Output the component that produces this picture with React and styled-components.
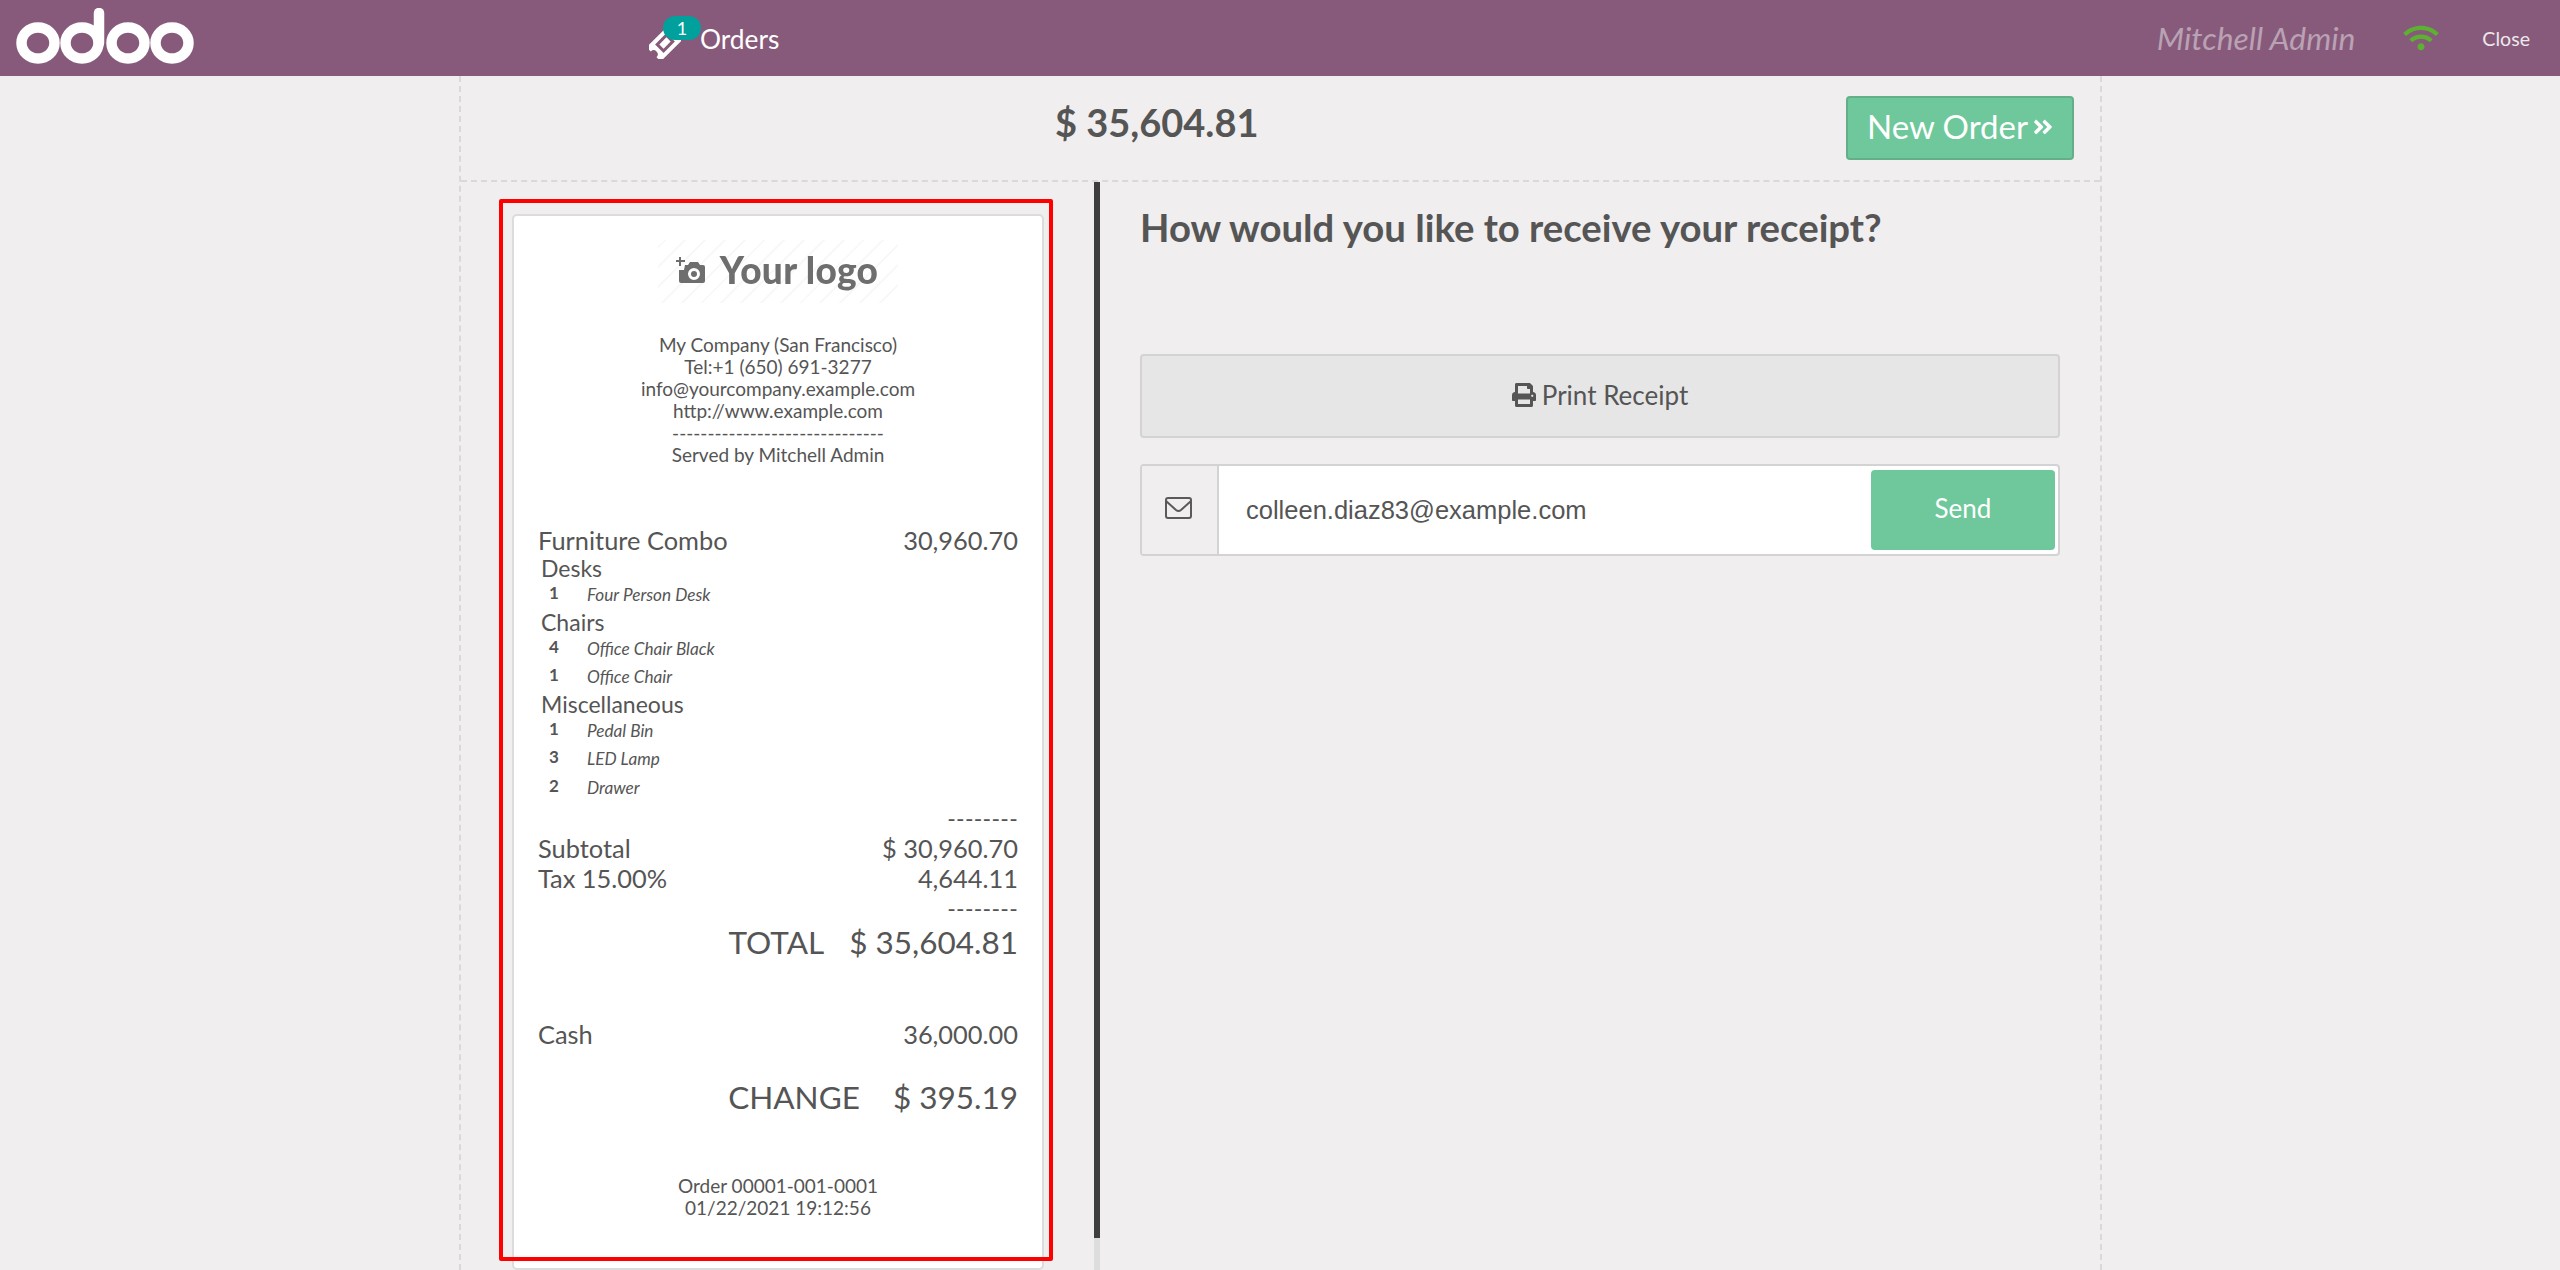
import React from 'react';
import styled, { createGlobalStyle } from 'styled-components';
import { FaPrint, FaAngleDoubleRight, FaWifi } from 'react-icons/fa';

const GlobalStyle = createGlobalStyle`
    html, body {
        margin: 0;
        height: 100%;
        overflow: hidden;
        background-color: #f0eeee;
        font-family: Lato, "Open Sans", sans-serif;
        color: #555555;
    }
`;

const Page = styled.div`
    width: 2560px;
    height: 1270px;
    display: flex;
    flex-direction: column;
    overflow: hidden;
`;

const Navbar = styled.header`
    height: 76px;
    flex: none;
    display: flex;
    align-items: center;
    background-color: #875a7b;
    color: #fff;
`;

const LogoMark = styled.svg`
    width: 180px;
    height: 56px;
    margin: 8px 0 0 16px;
    flex: none;
    align-self: flex-start;
`;

const OrdersTab = styled.div`
    position: relative;
    display: flex;
    align-items: center;
    margin-left: 453px;
    font-size: 26.300px;
    height: 76px;
`;

const TicketIcon = styled.svg`
    width: 32px;
    height: 32px;
    margin: 10px 19px 0 0;
`;

const Badge = styled.span`
    position: absolute;
    left: 14px;
    top: 16px;
    width: 38px;
    height: 24px;
    border-radius: 12px;
    background-color: #00a09d;
    font-size: 18px;
    line-height: 24px;
    text-align: center;
`;

const OrdersLabel = styled.span`
    margin-top: 2px;
`;

const NavRight = styled.div`
    margin-left: auto;
    display: flex;
    align-items: center;
`;

const UserName = styled.span`
    font-size: 31.800px;
    font-style: italic;
    color: #b9a2b4;
`;

const Wifi = styled(FaWifi)`
    margin-left: 48px;
    width: 36px;
    height: 28px;
    color: #5cb130;
`;

const CloseLink = styled.span`
    margin: 0 30px 0 43px;
    font-size: 19.600px;
    color: #ece8eb;
`;

const Screen = styled.main`
    flex: 1;
    min-height: 0;
    width: 1639px;
    margin-left: 459px;
    border-left: 2px dashed #d9d9d9;
    border-right: 2px dashed #d9d9d9;
    display: flex;
    flex-direction: column;
`;

const TopRow = styled.div`
    height: 104px;
    flex: none;
    position: relative;
    display: flex;
    align-items: center;
    justify-content: flex-end;
    border-bottom: 2px dashed #d9d9d9;
    padding-right: 26px;
`;

const TopAmount = styled.div`
    position: absolute;
    left: 594px;
    top: 17px;
    font-size: 38px;
    font-weight: 700;
    line-height: 58px;
`;

const NewOrder = styled.button`
    width: 228px;
    height: 64px;
    box-sizing: border-box;
    background-color: #6ec89b;
    border: 2px solid #64af8a;
    border-radius: 4px;
    color: #fff;
    font-family: inherit;
    font-size: 33px;
    display: flex;
    align-items: center;
    justify-content: center;
    gap: 5px;
    padding: 0 0 5px 0;
    svg {
        width: 20px;
        height: 24px;
        margin-top: 3px;
    }
`;

const Body = styled.div`
    flex: 1;
    min-height: 0;
    display: flex;
`;

const ReceiptColumn = styled.section`
    position: relative;
    width: 639px;
    flex: none;
    padding: 32px 0 0 51px;
    box-sizing: border-box;
    border-right: 6px solid transparent;
    background:
        linear-gradient(#3e3e3e, #3e3e3e) right top / 6px 1056px no-repeat border-box,
        linear-gradient(#dddddd, #dddddd) right top / 6px 100% no-repeat border-box;
`;

const Highlight = styled.div`
    position: absolute;
    left: 38px;
    top: 17px;
    width: 554px;
    height: 1062px;
    box-sizing: border-box;
    border: 4px solid #ff0000;
    border-radius: 2px;
    pointer-events: none;
`;

const Receipt = styled.div`
    width: 532px;
    height: 1056px;
    box-sizing: border-box;
    background-color: #fff;
    border: 2px solid #dcdcdc;
    border-radius: 5px;
    padding: 24px 24px 0 24px;
`;

const ReceiptLogo = styled.div`
    width: 240px;
    height: 63px;
    margin: 0 auto 31px auto;
    display: flex;
    align-items: center;
    justify-content: center;
    gap: 14px;
    color: #6e6e6e;
    padding-right: 2px;
    box-sizing: border-box;
    background: repeating-linear-gradient(-45deg, #fff 0 12px, #f8f8f8 12px 14px);
`;

const CameraIcon = styled.svg`
    width: 30px;
    height: 30px;
    margin-top: -2px;
    filter: blur(0.5px);
`;

const ReceiptLogoText = styled.span`
    font-size: 37px;
    font-weight: 900;
    letter-spacing: 0.3px;
    line-height: 59px;
    height: 59px;
    margin-bottom: 4px;
    filter: blur(0.7px);
`;

const CenterBlock = styled.div`
    text-align: center;
    font-size: 19px;
    line-height: 22px;
    margin-top: ${props => props.$top || 0}px;
`;

const ItemsBlock = styled.div`
    margin: 59px 0 1px 0;
`;

const LineRow = styled.div`
    display: flex;
    justify-content: space-between;
    font-size: 25.400px;
    line-height: 30px;
    margin-top: ${props => props.$top || 0}px;
`;

const RightRow = styled.div`
    display: flex;
    justify-content: flex-end;
    gap: ${props => props.$gap}px;
    font-size: 31.500px;
    line-height: 40px;
    margin-top: ${props => props.$top || 0}px;
`;

const GroupName = styled.div`
    font-size: 23px;
    line-height: 26px;
    padding-left: 3px;
`;

const SubItem = styled.div`
    display: flex;
    align-items: flex-start;
    height: ${props => props.$height || 28}px;
    line-height: 26px;
`;

const SubQty = styled.span`
    width: 49px;
    padding-left: 11px;
    box-sizing: border-box;
    font-size: 17px;
    font-weight: 700;
    line-height: 24px;
`;

const SubName = styled.span`
    font-size: 17.200px;
    font-style: italic;
    line-height: 28px;
`;

const Dashes = styled.div`
    text-align: right;
    font-size: 23px;
    line-height: 30px;
    height: 30px;
    letter-spacing: 0.3px;
`;

const ActionsColumn = styled.section`
    flex: 1;
    padding: 11px 40px 0 40px;
`;

const ActionsTitle = styled.h2`
    margin: 0;
    font-size: 38.300px;
    font-weight: 700;
    line-height: 68px;
`;

const PrintButton = styled.button`
    width: 100%;
    height: 84px;
    margin-top: 93px;
    box-sizing: border-box;
    background-color: #e6e6e6;
    border: 2px solid #d3d3d3;
    border-radius: 4px;
    color: #555;
    font-family: inherit;
    font-size: 26px;
    display: flex;
    align-items: center;
    justify-content: center;
    gap: 6px;
    padding: 0 0 2px 0;
    svg {
        width: 24px;
        height: 24px;
    }
`;

const EmailGroup = styled.div`
    height: 92px;
    margin-top: 26px;
    box-sizing: border-box;
    display: flex;
    background-color: #fff;
    border: 2px solid #d3d3d3;
    border-radius: 4px;
    overflow: hidden;
`;

const EmailAddon = styled.div`
    width: 77px;
    flex: none;
    display: flex;
    align-items: center;
    justify-content: center;
    padding-right: 2px;
    box-sizing: border-box;
    background-color: #f0eeee;
    border-right: 2px solid #d3d3d3;
    svg {
        width: 27px;
        height: 22px;
        margin-bottom: 4px;
    }
`;

const EmailValue = styled.div`
    flex: 1;
    padding-left: 27px;
    font-family: "Liberation Sans", Arial, sans-serif;
    font-size: 25.500px;
    line-height: 88px;
`;

const SendButton = styled.button`
    width: 184px;
    height: 80px;
    margin: 4px 3px 0 0;
    flex: none;
    background-color: #6ec89b;
    border: none;
    border-radius: 4px;
    color: #fff;
    font-family: inherit;
    font-size: 26px;
    padding: 0 0 4px 0;
`;

function OdooLogo() {
    return (
        <LogoMark viewBox="0 0 180 56" fill="none" stroke="#fff" strokeWidth="10.5">
            <ellipse cx="22" cy="35" rx="16.5" ry="15.5" />
            <ellipse cx="66" cy="35" rx="16.5" ry="15.5" />
            <path d="M83 5v30" strokeLinecap="round" />
            <ellipse cx="112" cy="35" rx="16.5" ry="15.5" />
            <ellipse cx="156" cy="35" rx="16.5" ry="15.5" />
        </LogoMark>
    );
}

function Ticket() {
    return (
        <TicketIcon viewBox="0 0 32 32">
            <g transform="rotate(-45 16 16)">
                <path
                    fill="#fff"
                    fillRule="evenodd"
                    d="M0 6h32v6a4 4 0 0 0 0 8v6H0v-6a4 4 0 0 0 0-8zM8 10v12h16v-12z"
                />
                <rect x="11" y="13" width="10" height="6" fill="#fff" />
            </g>
        </TicketIcon>
    );
}

function Camera() {
    return (
        <CameraIcon viewBox="0 0 30 30">
            <path
                fill="#6e6e6e"
                fillRule="evenodd"
                d="M9 9h3l2-3h8l2 3h3a2 2 0 0 1 2 2v14a2 2 0 0 1-2 2H5a2 2 0 0 1-2-2V14h5zM18 12a6 6 0 1 0 0 12 6 6 0 0 0 0-12zM18 15a3 3 0 1 1 0 6 3 3 0 0 1 0-6z"
            />
            <path stroke="#6e6e6e" strokeWidth="2" d="M4 1v9M0 5h9" />
        </CameraIcon>
    );
}

function EnvelopeIcon() {
    return (
        <svg viewBox="0 0 27 22" fill="none" stroke="#5a5a5a" strokeWidth="2">
            <rect x="1" y="1" width="25" height="20" rx="2" />
            <path d="M1 4l10 9q2.500 2 5 0l10-9" />
        </svg>
    );
}

export default function App() {
    return (
        <Page>
            <GlobalStyle />
            <Navbar>
                <OdooLogo />
                <OrdersTab>
                    <Ticket />
                    <Badge>1</Badge>
                    <OrdersLabel>Orders</OrdersLabel>
                </OrdersTab>
                <NavRight>
                    <UserName>Mitchell Admin</UserName>
                    <Wifi />
                    <CloseLink>Close</CloseLink>
                </NavRight>
            </Navbar>
            <Screen>
                <TopRow>
                    <TopAmount>$ 35,604.81</TopAmount>
                    <NewOrder>
                        New Order
                        <FaAngleDoubleRight />
                    </NewOrder>
                </TopRow>
                <Body>
                    <ReceiptColumn>
                        <Receipt>
                            <ReceiptLogo>
                                <Camera />
                                <ReceiptLogoText>Your logo</ReceiptLogoText>
                            </ReceiptLogo>
                            <CenterBlock>
                                <div>My Company (San Francisco)</div>
                                <div>Tel:+1 (650) 691-3277</div>
                                <div>info@yourcompany.example.com</div>
                                <div>http://www.example.com</div>
                                <div>------------------------------</div>
                                <div>Served by Mitchell Admin</div>
                            </CenterBlock>
                            <ItemsBlock>
                                <LineRow>
                                    <span>Furniture Combo</span>
                                    <span>30,960.70</span>
                                </LineRow>
                                <GroupName>Desks</GroupName>
                                <SubItem>
                                    <SubQty>1</SubQty>
                                    <SubName>Four Person Desk</SubName>
                                </SubItem>
                                <GroupName>Chairs</GroupName>
                                <SubItem>
                                    <SubQty>4</SubQty>
                                    <SubName>Office Chair Black</SubName>
                                </SubItem>
                                <SubItem>
                                    <SubQty>1</SubQty>
                                    <SubName>Office Chair</SubName>
                                </SubItem>
                                <GroupName>Miscellaneous</GroupName>
                                <SubItem>
                                    <SubQty>1</SubQty>
                                    <SubName>Pedal Bin</SubName>
                                </SubItem>
                                <SubItem $height={29}>
                                    <SubQty>3</SubQty>
                                    <SubName>LED Lamp</SubName>
                                </SubItem>
                                <SubItem>
                                    <SubQty>2</SubQty>
                                    <SubName>Drawer</SubName>
                                </SubItem>
                            </ItemsBlock>
                            <Dashes>--------</Dashes>
                            <LineRow>
                                <span>Subtotal</span>
                                <span>$ 30,960.70</span>
                            </LineRow>
                            <LineRow>
                                <span>Tax 15.00%</span>
                                <span>4,644.11</span>
                            </LineRow>
                            <Dashes>--------</Dashes>
                            <RightRow $gap={25} $top={-1}>
                                <span>TOTAL</span>
                                <span>$ 35,604.81</span>
                            </RightRow>
                            <LineRow $top={57}>
                                <span>Cash</span>
                                <span>36,000.00</span>
                            </LineRow>
                            <RightRow $gap={33} $top={28}>
                                <span>CHANGE</span>
                                <span>$ 395.19</span>
                            </RightRow>
                            <CenterBlock $top={58}>
                                <div>Order 00001-001-0001</div>
                                <div>01/22/2021 19:12:56</div>
                            </CenterBlock>
                        </Receipt>
                        <Highlight />
                    </ReceiptColumn>
                    <ActionsColumn>
                        <ActionsTitle>How would you like to receive your receipt?</ActionsTitle>
                        <PrintButton>
                            <FaPrint />
                            Print Receipt
                        </PrintButton>
                        <EmailGroup>
                            <EmailAddon>
                                <EnvelopeIcon />
                            </EmailAddon>
                            <EmailValue>colleen.diaz83@example.com</EmailValue>
                            <SendButton>Send</SendButton>
                        </EmailGroup>
                    </ActionsColumn>
                </Body>
            </Screen>
        </Page>
    );
}
